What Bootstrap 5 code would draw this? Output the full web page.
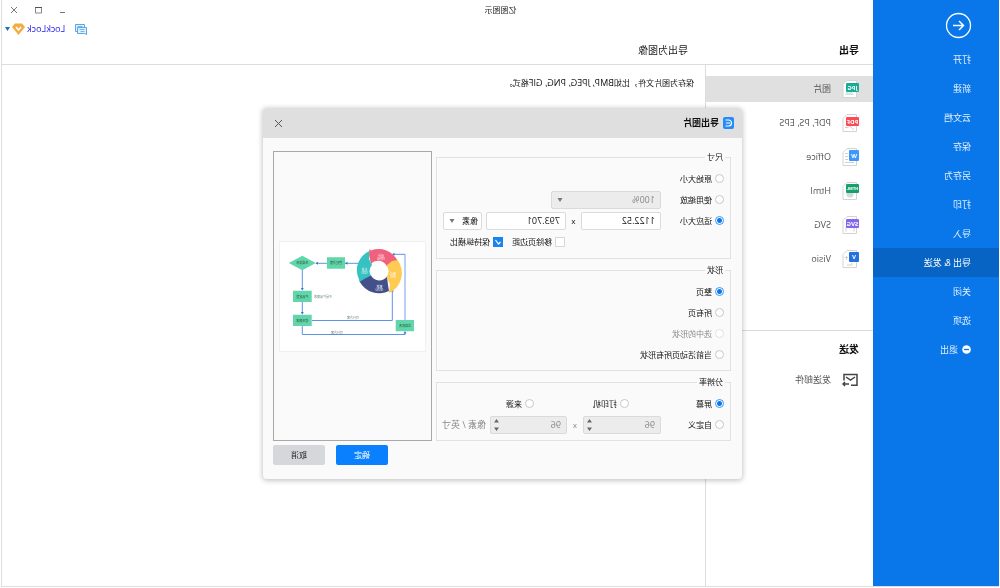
<!DOCTYPE html>
<html lang="zh-CN">
<head>
<meta charset="utf-8">
<meta name="viewport" content="width=device-width, initial-scale=1">
<title>亿图图示</title>
<link href="https://cdn.jsdelivr.net/npm/bootstrap@5.3.0/dist/css/bootstrap.min.css" rel="stylesheet">
<style>
  body { font-family: "Open Sans", "Noto Sans CJK SC", sans-serif; font-size: 9px; line-height: 12px; color: #222; background: #fff; }
  /* The whole window is shown mirrored */
  .app-window { transform: scaleX(-1); padding: 0 1px 1px; position: relative; }
  .app-frame { border-right: 1px solid #dedede; border-bottom: 1px solid #dedede; }
  .side-menu { width: 126px; background: #0976ea; padding-top: 12px; }
  .back-button { margin: 0 0 6px 27px; }
  .side-menu a { display: flex; align-items: center; height: 29px; padding-left: 28px; gap: 4px; color: #e4f1ff; text-decoration: none; }
  .side-menu a.current { background: #0864c4; color: #fff; }
  .plain-button { border: 0; background: none; padding: 0; color: inherit; line-height: 0; }
  .title-bar { height: 20px; font-size: 8px; }
  .window-buttons { width: 126px; }
  .window-buttons button { width: 24px; height: 20px; }
  .account-row { height: 18px; padding-right: 3px; gap: 2px; }
  .account-row a { color: #2a22f0; text-decoration: none; margin-left: 8px; }
  .heading-row { height: 27px; border-bottom: 1px solid #dcdcdc; font-size: 10px; padding-bottom: 2px; }
  .heading-row h1, .heading-row h2 { font-size: 10px; line-height: 14px; margin: 0; }
  .heading-row h1, .list-column { width: 168px; }
  .heading-row h1 { padding-left: 14px; }
  .heading-row h1, .list-column h2, .dialog-title { font-weight: 700; color: #111; }
  .heading-row h2 { padding-left: 17px; font-weight: 400; }
  .list-column { border-right: 1px solid #dcdcdc; }
  .export-list { height: 266px; padding-top: 11px; border-bottom: 1px solid #dcdcdc; }
  .export-list a, .send-list a { display: flex; align-items: center; height: 26px; margin-bottom: 8px; padding-left: 14px; gap: 11px; color: #555; text-decoration: none; }
  .export-list a.current { background: #e0e0e0; }
  .list-column h2 { font-size: 10px; line-height: 14px; margin: 11px 0 11px 14px; }
  .file-icon text { font: 700 6px "Open Sans", sans-serif; fill: #fff; text-anchor: middle; }
  .file-icon .long-name { font-size: 4px; }
  .description { font-size: 8px; padding: 12px 11px; margin: 0; color: #111; }
  .description span { font-size: 9px; }

  .dialog-layer { position: absolute; inset: 0; padding: 108px 5px 0 0; }
  .export-dialog { width: 479px; max-width: 100%; background: #fafafa; border-radius: 4px; box-shadow: 0 1px 5px 1px rgba(0,0,0,.22); overflow: hidden; }
  .dialog-head { height: 30px; background: #dfdfdf; padding: 0 11px 0 8px; gap: 4px; }
  .dialog-title { font-size: 9px; line-height: 12px; margin: 0; }
  .dialog-body { padding: 13px 10px 14px 11px; font-size: 8px; color: #111; }
  .options-column { width: 295px; gap: 5px; }
  .options-column fieldset { border: 1px solid #e2e2e2; padding: 5px 6px; }
  .options-column legend { float: none; width: auto; margin: 0 0 0 -1px; padding: 0 2px; font-size: 8px; line-height: 12px; }
  .option-row { display: grid; align-items: center; height: 21px; }
  .scale-row { grid-template-columns: 63px 110px; }
  .size-row { grid-template-columns: 63px 80px 15px 80px 4px 1fr; }
  .trim-row { height: 22px; padding-left: 159px; display: flex; gap: 9px; }
  .source-row { grid-template-columns: 95px 95px 1fr; }
  .dpi-row { grid-template-columns: 63px 78px 16px 77px 4px 1fr; }
  .option-row label { display: inline-flex; align-items: center; gap: 3px; white-space: nowrap; }
  .option-row input[type=radio], .option-row input[type=checkbox] { appearance: none; flex: none; width: 9px; height: 9px; margin: 0; border: 1px solid #c8c8c8; background: #fff; }
  .option-row input[type=radio] { border-radius: 50%; }
  .option-row input[type=radio]:checked { border-color: #3c93f5; background: radial-gradient(circle, #0b79ee 2px, #fff 3px); }
  .option-row input[type=checkbox] { width: 10px; height: 10px; border-color: #d8d8d8; }
  .option-row input[type=checkbox]:checked { border-color: #1b82f0; background: #1b82f0 url("data:image/svg+xml,%3Csvg xmlns='http://www.w3.org/2000/svg' viewBox='0 0 8 8'%3E%3Cpath d='M1.5 4l2 2 3-4' fill='none' stroke='%23fff' stroke-width='1.200'/%3E%3C/svg%3E"); }
  .option-row input:disabled { border-color: #e2e2e2; }
  .muted { color: #888; }
  .unit-label { font-size: 9px; }
  .field { width: 100%; height: 18px; border: 1px solid #dadada; border-radius: 2px; background: #fff; color: #111; font-size: 9px; line-height: 12px; padding: 0 5px; min-width: 0; }
  select.field { appearance: none; background: #fff url("data:image/svg+xml,%3Csvg xmlns='http://www.w3.org/2000/svg' viewBox='0 0 6 4'%3E%3Cpath d='M0.500 0h5L3 4z' fill='%23777'/%3E%3C/svg%3E") no-repeat right 5px center / 6px 4px; padding: 0 5px; }
  select.unit-field { font-size: 8px; padding: 0 3px; }
  .field:disabled, .spin-field { background-color: #ececec; color: #888; opacity: 1; }
  .spin-field { display: flex; align-items: center; padding: 0 3px 0 5px; }
  .spin-field input { flex: 1; min-width: 0; border: 0; padding: 0; background: none; color: #888; }
  .preview-box { border: 1px solid #a8a8a8; padding: 6px; }
  .preview-box svg { background: #fff; outline: 1px solid #f0f0f0; width: 100%; }
  .preview-box text { font: 3px "Open Sans", "Noto Sans CJK SC", sans-serif; text-anchor: middle; fill: #24503f; }
  .preview-box .ring-text text { fill: #fff; }
  .dialog-actions { gap: 11px; margin-top: 4px; }
  .dialog-actions .btn { width: 52px; height: 20px; padding: 0; font-size: 8px; line-height: 12px; border: 0; border-radius: 2px; }
  .dialog-actions .confirm-button, .confirm-button:hover { background: #0a80ff; color: #fff; }
  .dialog-actions .cancel-button, .cancel-button:hover { background: #d5d7db; color: #222; }
</style>
</head>
<body>
<div class="app-window min-vh-100 d-flex">
  <div class="app-frame d-flex flex-fill">
    <nav class="side-menu flex-shrink-0">
      <button class="back-button plain-button text-white" aria-label="返回">
        <svg width="27" height="27" viewBox="0 0 27 27" fill="none" stroke="#fff"><circle cx="13.500" cy="13.500" r="12" stroke-width="1.300"/><path d="M19 13.500H8.500M13 9l-4.500 4.500L13 18" stroke-width="1.500"/></svg>
      </button>
      <a href="#">打开</a>
      <a href="#">新建</a>
      <a href="#">云文档</a>
      <a href="#">保存</a>
      <a href="#">另存为</a>
      <a href="#">打印</a>
      <a href="#">导入</a>
      <a href="#" class="current">导出 &amp; 发送</a>
      <a href="#">关闭</a>
      <a href="#">选项</a>
      <a href="#"><svg width="9" height="9" viewBox="0 0 9 9"><circle cx="4.500" cy="4.500" r="4.300" fill="#fff"/><path d="M2 4.500h5" stroke="#0976ea" stroke-width="1.300"/></svg>退出</a>
    </nav>

    <main class="flex-fill d-flex flex-column">
      <header>
        <div class="title-bar d-flex align-items-center">
          <div class="flex-fill text-center">亿图图示</div>
          <div class="window-buttons d-flex justify-content-end">
            <button class="plain-button" aria-label="最小化"><svg width="8" height="8" stroke="#777"><path d="M1 6.500h5"/></svg></button>
            <button class="plain-button" aria-label="最大化"><svg width="8" height="8" fill="none" stroke="#888"><path d="M.5 1v6h6V1"/><path d="M0 1.500h7" stroke="#555"/></svg></button>
            <button class="plain-button" aria-label="关闭"><svg width="8" height="8" stroke="#777"><path d="M1 1l6 6M7 1L1 7"/></svg></button>
          </div>
        </div>
        <div class="account-row d-flex justify-content-end align-items-center">
          <button class="plain-button" aria-label="消息"><svg width="12" height="12" viewBox="0 0 12 12" fill="#e3f1fd" stroke="#5aa5e8"><path d="M2.500 1.500h9v7h-9z"/><path d="M.5 4.500h9v6H2.500L.5 11.500z"/><path d="M2.500 6.500h5M2.500 8.500h4M4.500 3.500h5" stroke-width=".8"/></svg></button>
          <a href="#">LockLock</a>
          <svg width="13" height="12" viewBox="0 0 13 12"><path d="M3 .5h7L13 4 6.500 12 0 4z" fill="#f2ac42"/><path d="M4 4l2.500 3L9 4" fill="none" stroke="#fff" stroke-width="1.600"/></svg>
          <svg width="5" height="4" viewBox="0 0 5 4"><path d="M0 0h5L2.500 4z" fill="#1f6fb8"/></svg>
        </div>
        <div class="heading-row d-flex align-items-center">
          <h1>导出</h1>
          <h2>导出为图像</h2>
        </div>
      </header>

      <div class="d-flex flex-fill">
        <section class="list-column flex-shrink-0">
          <div class="export-list">
            <a href="#" class="current"><svg class="file-icon" width="17" height="18"><path d="M2.500.500H12l4 4v13H2.500z" fill="#fff" stroke="#d4d4d4"/><path d="M5 15l3-4 2 2 2-2 2 4z" fill="#cfe8e0"/><rect y="3" width="13" height="9" rx="1" fill="#1aab97"/><text x="6.500" y="9.700">JPG</text></svg>图片</a>
            <a href="#"><svg class="file-icon" width="17" height="18"><path d="M2.500.500H12l4 4v13H2.500z" fill="#fff" stroke="#d4d4d4"/><path d="M5 15.500c3-1 4-4 4-4s2 3 5 2" fill="none" stroke="#e5c4c4"/><rect y="3" width="13" height="9" rx="1" fill="#fc4a55"/><text x="6.500" y="9.700">PDF</text></svg>PDF, PS, EPS</a>
            <a href="#"><svg class="file-icon" width="17" height="18"><path d="M2.500.500H12l4 4v13H2.500z" fill="#fff" stroke="#d4d4d4"/><path d="M11 5.500h3M11 8.500h3M11 11.500h3M5 14.500h9" stroke="#d0d0d0"/><rect y="2" width="10" height="11" rx="1" fill="#3f97fc"/><text x="5" y="9.700">W</text></svg>Office</a>
            <a href="#"><svg class="file-icon" width="17" height="18"><path d="M2.500.500H12l4 4v13H2.500z" fill="#fff" stroke="#d4d4d4"/><circle cx="9" cy="12" r="3.500" fill="#cfdcd6"/><rect y="2" width="13" height="9" rx="1" fill="#16a06c"/><text class="long-name" x="6.500" y="8">HTML</text></svg>Html</a>
            <a href="#"><svg class="file-icon" width="17" height="18"><path d="M2.500.500H12l4 4v13H2.500z" fill="#fff" stroke="#d4d4d4"/><path d="M5 15.500v-4h8v4" fill="none" stroke="#cfcfcf"/><rect y="3" width="13" height="9" rx="1" fill="#8468ec"/><text x="6.500" y="9.700">SVG</text></svg>SVG</a>
            <a href="#"><svg class="file-icon" width="17" height="18"><path d="M2.500.500H12l4 4v13H2.500z" fill="#fff" stroke="#d4d4d4"/><path d="M11 7.500h3.500M12.500 6v4M7 13v2h5" fill="none" stroke="#d0d0d0"/><rect y="2" width="10" height="10" rx="1" fill="#2672dc"/><text x="5" y="9.300">V</text></svg>Visio</a>
          </div>
          <h2>发送</h2>
          <div class="send-list">
            <a href="#"><svg width="17" height="16" viewBox="0 0 17 16" fill="none" stroke="#444" stroke-width="1.500"><path d="M8 13.300H2V2.500h13v6"/><path d="M4 5l4.500 3L13 5"/><path d="M10 12h6M14 10l2 2-2 2"/></svg>发送邮件</a>
          </div>
        </section>
        <p class="description flex-fill">保存为图片文件，比如<span>BMP, JPEG, PNG, GIF</span>格式。</p>
      </div>
    </main>
  </div>

  <div class="dialog-layer d-flex justify-content-center align-items-start">
    <div class="export-dialog" role="dialog" aria-labelledby="dialog-title">
      <div class="dialog-head d-flex align-items-center">
        <svg width="11" height="12" viewBox="0 0 11 12"><rect width="11" height="12" rx="2" fill="#258bf8"/><path d="M8.500 3H5.500a3 3 0 0 0 0 6h3M4 6h4" fill="none" stroke="#fff" stroke-width="1.200"/></svg>
        <h2 class="dialog-title" id="dialog-title">导出图片</h2>
        <button class="plain-button ms-auto" aria-label="关闭"><svg width="9" height="9" stroke="#555"><path d="M1 1l7 7M8 1L1 8"/></svg></button>
      </div>
      <form class="dialog-body">
        <div class="d-flex gap-1">
          <div class="options-column d-flex flex-column flex-shrink-0">
            <fieldset>
              <legend>尺寸</legend>
              <div class="option-row"><label><input type="radio" name="size">原始大小</label></div>
              <div class="option-row scale-row">
                <label><input type="radio" name="size">使用缩放</label>
                <select class="field" disabled aria-label="缩放"><option>100%</option></select>
              </div>
              <div class="option-row size-row">
                <label><input type="radio" name="size" checked>适应大小</label>
                <input class="field" type="text" value="1122.52" aria-label="宽度">
                <span class="text-center">x</span>
                <input class="field" type="text" value="793.701" aria-label="高度">
                <span></span>
                <select class="field unit-field" aria-label="单位"><option>像素</option></select>
              </div>
              <div class="option-row trim-row">
                <label><input type="checkbox">移除页边距</label>
                <label><input type="checkbox" checked>保持纵横比</label>
              </div>
            </fieldset>
            <fieldset>
              <legend>形状</legend>
              <div class="option-row"><label><input type="radio" name="shape" checked>整页</label></div>
              <div class="option-row"><label><input type="radio" name="shape">所有页</label></div>
              <div class="option-row"><label class="muted"><input type="radio" name="shape" disabled>选中的形状</label></div>
              <div class="option-row"><label><input type="radio" name="shape">当前活动页所有形状</label></div>
            </fieldset>
            <fieldset>
              <legend>分辨率</legend>
              <div class="option-row source-row">
                <label><input type="radio" name="dpi" checked>屏幕</label>
                <label><input type="radio" name="dpi">打印机</label>
                <label><input type="radio" name="dpi">来源</label>
              </div>
              <div class="option-row dpi-row">
                <label><input type="radio" name="dpi">自定义</label>
                <span class="field spin-field"><input type="text" value="96" disabled aria-label="水平分辨率"><svg width="5" height="12"><path d="M0 3.500L2.500 0 5 3.500zM0 8.500L2.500 12 5 8.500z" fill="#666"/></svg></span>
                <span class="text-center muted">x</span>
                <span class="field spin-field"><input type="text" value="96" disabled aria-label="垂直分辨率"><svg width="5" height="12"><path d="M0 3.500L2.500 0 5 3.500zM0 8.500L2.500 12 5 8.500z" fill="#666"/></svg></span>
                <span></span>
                <span class="unit-label muted text-nowrap">像素 / 英寸</span>
              </div>
            </fieldset>
          </div>
          <div class="preview-box flex-fill d-flex align-items-center">
            <svg viewBox="0 0 145 109" aria-label="预览">
              <g fill="none" stroke="#4c86e2" stroke-width=".9">
                <path d="M66 21.300h14M98 21.300h11M122.700 28v20M122.700 60v12M113 78.500H32.700V48M122.700 84v8.500H20V90"/>
                <path d="M20 78V12.300" stroke="#9dbcf0" stroke-width="1.400"/><path d="M20 12.300h12"/>
              </g>
              <path d="M80 21.300l-2.500-1.500v3zM109.500 21.300l-2.500-1.500v3zM122.700 48.500l-1.500-2.500h3zM122.700 72.500l-1.500-2.500h3zM32.700 47l-1.500 2.500h3zM20 89l-1.500 2.500h3zM33 12.300l-2.500-1.500v3z" fill="#3f74d6"/>
              <path d="M27.300 19A21 21 0 0 1 54 8.500L55.700 7 56 13 54 22A9.500 9.500 0 0 0 38 24.500L33 22z" fill="#f0617e"/>
              <path d="M55.700 9A21 21 0 0 1 66 37.500L65.500 40 60 39 54 34A9.500 9.500 0 0 0 53 23L56 17z" fill="#35c2c1"/>
              <path d="M65.300 39.700A22 22 0 0 1 36 49L37 43 38 34.500A9.500 9.500 0 0 0 54 33.500L59 36z" fill="#435089"/>
              <path d="M36 51A22 22 0 0 1 27.300 18L33 19 38.500 23.500A9.500 9.500 0 0 0 38.500 35L35 42z" fill="#ffcb52"/>
              <g fill="#61d6aa"><path d="M80 15.300h18v11.400H80zM113.300 48.700H132V60h-18.700zM113.300 72.700H132V84h-18.700zM11 78h18.300v11.300H11zM109.200 21l13.500-7.200L136.200 21l-13.500 7.200z"/></g>
              <text x="89" y="22.200">管理决策</text>
              <text x="122.700" y="22.200">生成报告</text>
              <text x="122.700" y="55.500">产品定型</text>
              <text x="122.700" y="79.500">修改需求</text>
              <text x="20" y="85">返回修改</text>
              <g opacity=".7"><text x="102" y="56">不是产品需求</text><text x="72" y="77.300">可行方案</text><text x="88" y="91.600">可行方案</text></g>
              <g class="ring-text"><text x="44" y="14.500">设计</text><text x="44" y="18">(30%)</text><text x="60.500" y="28.500">分析</text><text x="60.500" y="32">(5%)</text><text x="45.500" y="45.500">需求</text><text x="45.500" y="49">(35%)</text><text x="32" y="32.500">测试</text><text x="32" y="36">(5%)</text></g>
            </svg>
          </div>
        </div>
        <div class="dialog-actions d-flex justify-content-end">
          <button type="button" class="btn confirm-button">确定</button>
          <button type="button" class="btn cancel-button">取消</button>
        </div>
      </form>
    </div>
  </div>
</div>
<script src="https://cdn.jsdelivr.net/npm/bootstrap@5.3.0/dist/js/bootstrap.bundle.min.js"></script>
</body>
</html>
